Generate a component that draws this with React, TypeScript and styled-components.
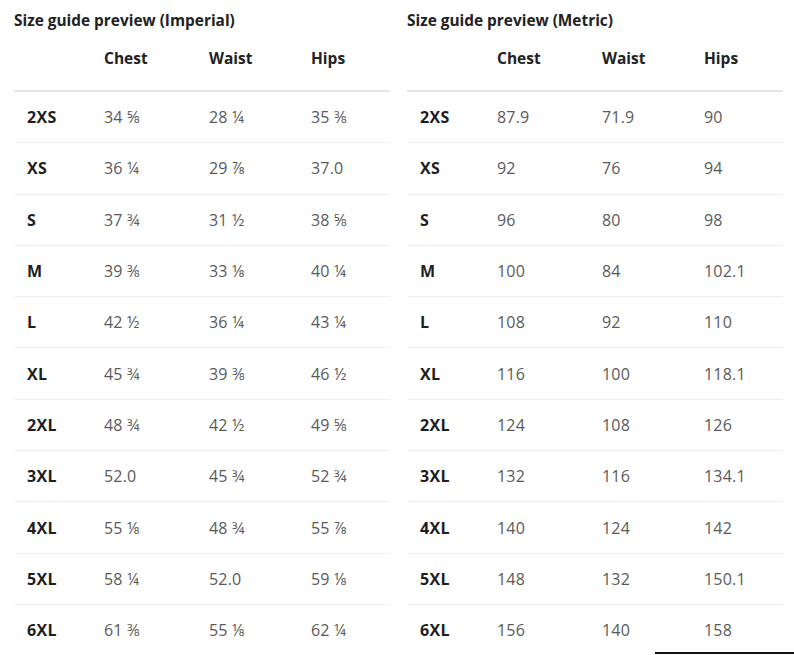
import React from "react";
import styled, { createGlobalStyle } from "styled-components";

const Global = createGlobalStyle`
  html, body { margin: 0; padding: 0; background: #fff; }
  body { font-family: "Open Sans", "Liberation Sans", sans-serif; }
`;

const Page = styled.div`
  position: relative;
  width: 794px;
  height: 655px;
  overflow: hidden;
  display: grid;
  grid-template-columns: 376px 376px;
  column-gap: 17px;
  padding-left: 14px;
  box-sizing: border-box;
`;

const Section = styled.section`
  display: flex;
  flex-direction: column;
`;

const Title = styled.h2`
  margin: 0;
  padding-top: 11px;
  height: 30px;
  box-sizing: border-box;
  font-size: 15.4px;
  line-height: 20px;
  font-weight: 700;
  color: #222;
`;

const Row = styled.div<{ $head?: boolean }>`
  display: grid;
  grid-template-columns: 77px 105px 102px 1fr;
  align-items: center;
  box-sizing: border-box;
  height: ${(p) => (p.$head ? "62px" : "51.3px")};
  padding-left: 13px;
  padding-bottom: ${(p) => (p.$head ? "4px" : "0")};
  border-bottom: ${(p) => (p.$head ? "2px solid #e5e5e5" : "1px solid #efefef")};
  &:last-child { border-bottom-color: transparent; }
`;

const Head = styled.div`
  font-size: 15.5px;
  font-weight: 700;
  color: #222;
`;

const Label = styled.div`
  font-size: 16px;
  font-weight: 700;
  color: #1e1e1e;
  letter-spacing: 0.3px;
`;

const Value = styled.div`
  font-size: 16px;
  font-weight: 400;
  color: #5a5a5a;
  letter-spacing: 0.2px;
`;

const Overlay = styled.div`
  position: absolute;
  left: 655px;
  right: 0;
  bottom: 1px;
  height: 2px;
  background: #111;
`;

const sizes = ["2XS", "XS", "S", "M", "L", "XL", "2XL", "3XL", "4XL", "5XL", "6XL"];

const imperial = [
  ["34 ⅝", "28 ¼", "35 ⅜"],
  ["36 ¼", "29 ⅞", "37.0"],
  ["37 ¾", "31 ½", "38 ⅝"],
  ["39 ⅜", "33 ⅛", "40 ¼"],
  ["42 ½", "36 ¼", "43 ¼"],
  ["45 ¾", "39 ⅜", "46 ½"],
  ["48 ¾", "42 ½", "49 ⅝"],
  ["52.0", "45 ¾", "52 ¾"],
  ["55 ⅛", "48 ¾", "55 ⅞"],
  ["58 ¼", "52.0", "59 ⅛"],
  ["61 ⅜", "55 ⅛", "62 ¼"],
];

const metric = [
  ["87.9", "71.9", "90"],
  ["92", "76", "94"],
  ["96", "80", "98"],
  ["100", "84", "102.1"],
  ["108", "92", "110"],
  ["116", "100", "118.1"],
  ["124", "108", "126"],
  ["132", "116", "134.1"],
  ["140", "124", "142"],
  ["148", "132", "150.1"],
  ["156", "140", "158"],
];

function Table({ title, data }: { title: string; data: string[][] }) {
  return (
    <Section>
      <Title>{title}</Title>
      <Row $head>
        <span />
        <Head>Chest</Head>
        <Head>Waist</Head>
        <Head>Hips</Head>
      </Row>
      {data.map((r, i) => (
        <Row key={sizes[i]}>
          <Label>{sizes[i]}</Label>
          {r.map((v, j) => (
            <Value key={j}>{v}</Value>
          ))}
        </Row>
      ))}
    </Section>
  );
}

export default function App() {
  return (
    <>
      <Global />
      <Page>
        <Table title="Size guide preview (Imperial)" data={imperial} />
        <Table title="Size guide preview (Metric)" data={metric} />
        <Overlay />
      </Page>
    </>
  );
}
